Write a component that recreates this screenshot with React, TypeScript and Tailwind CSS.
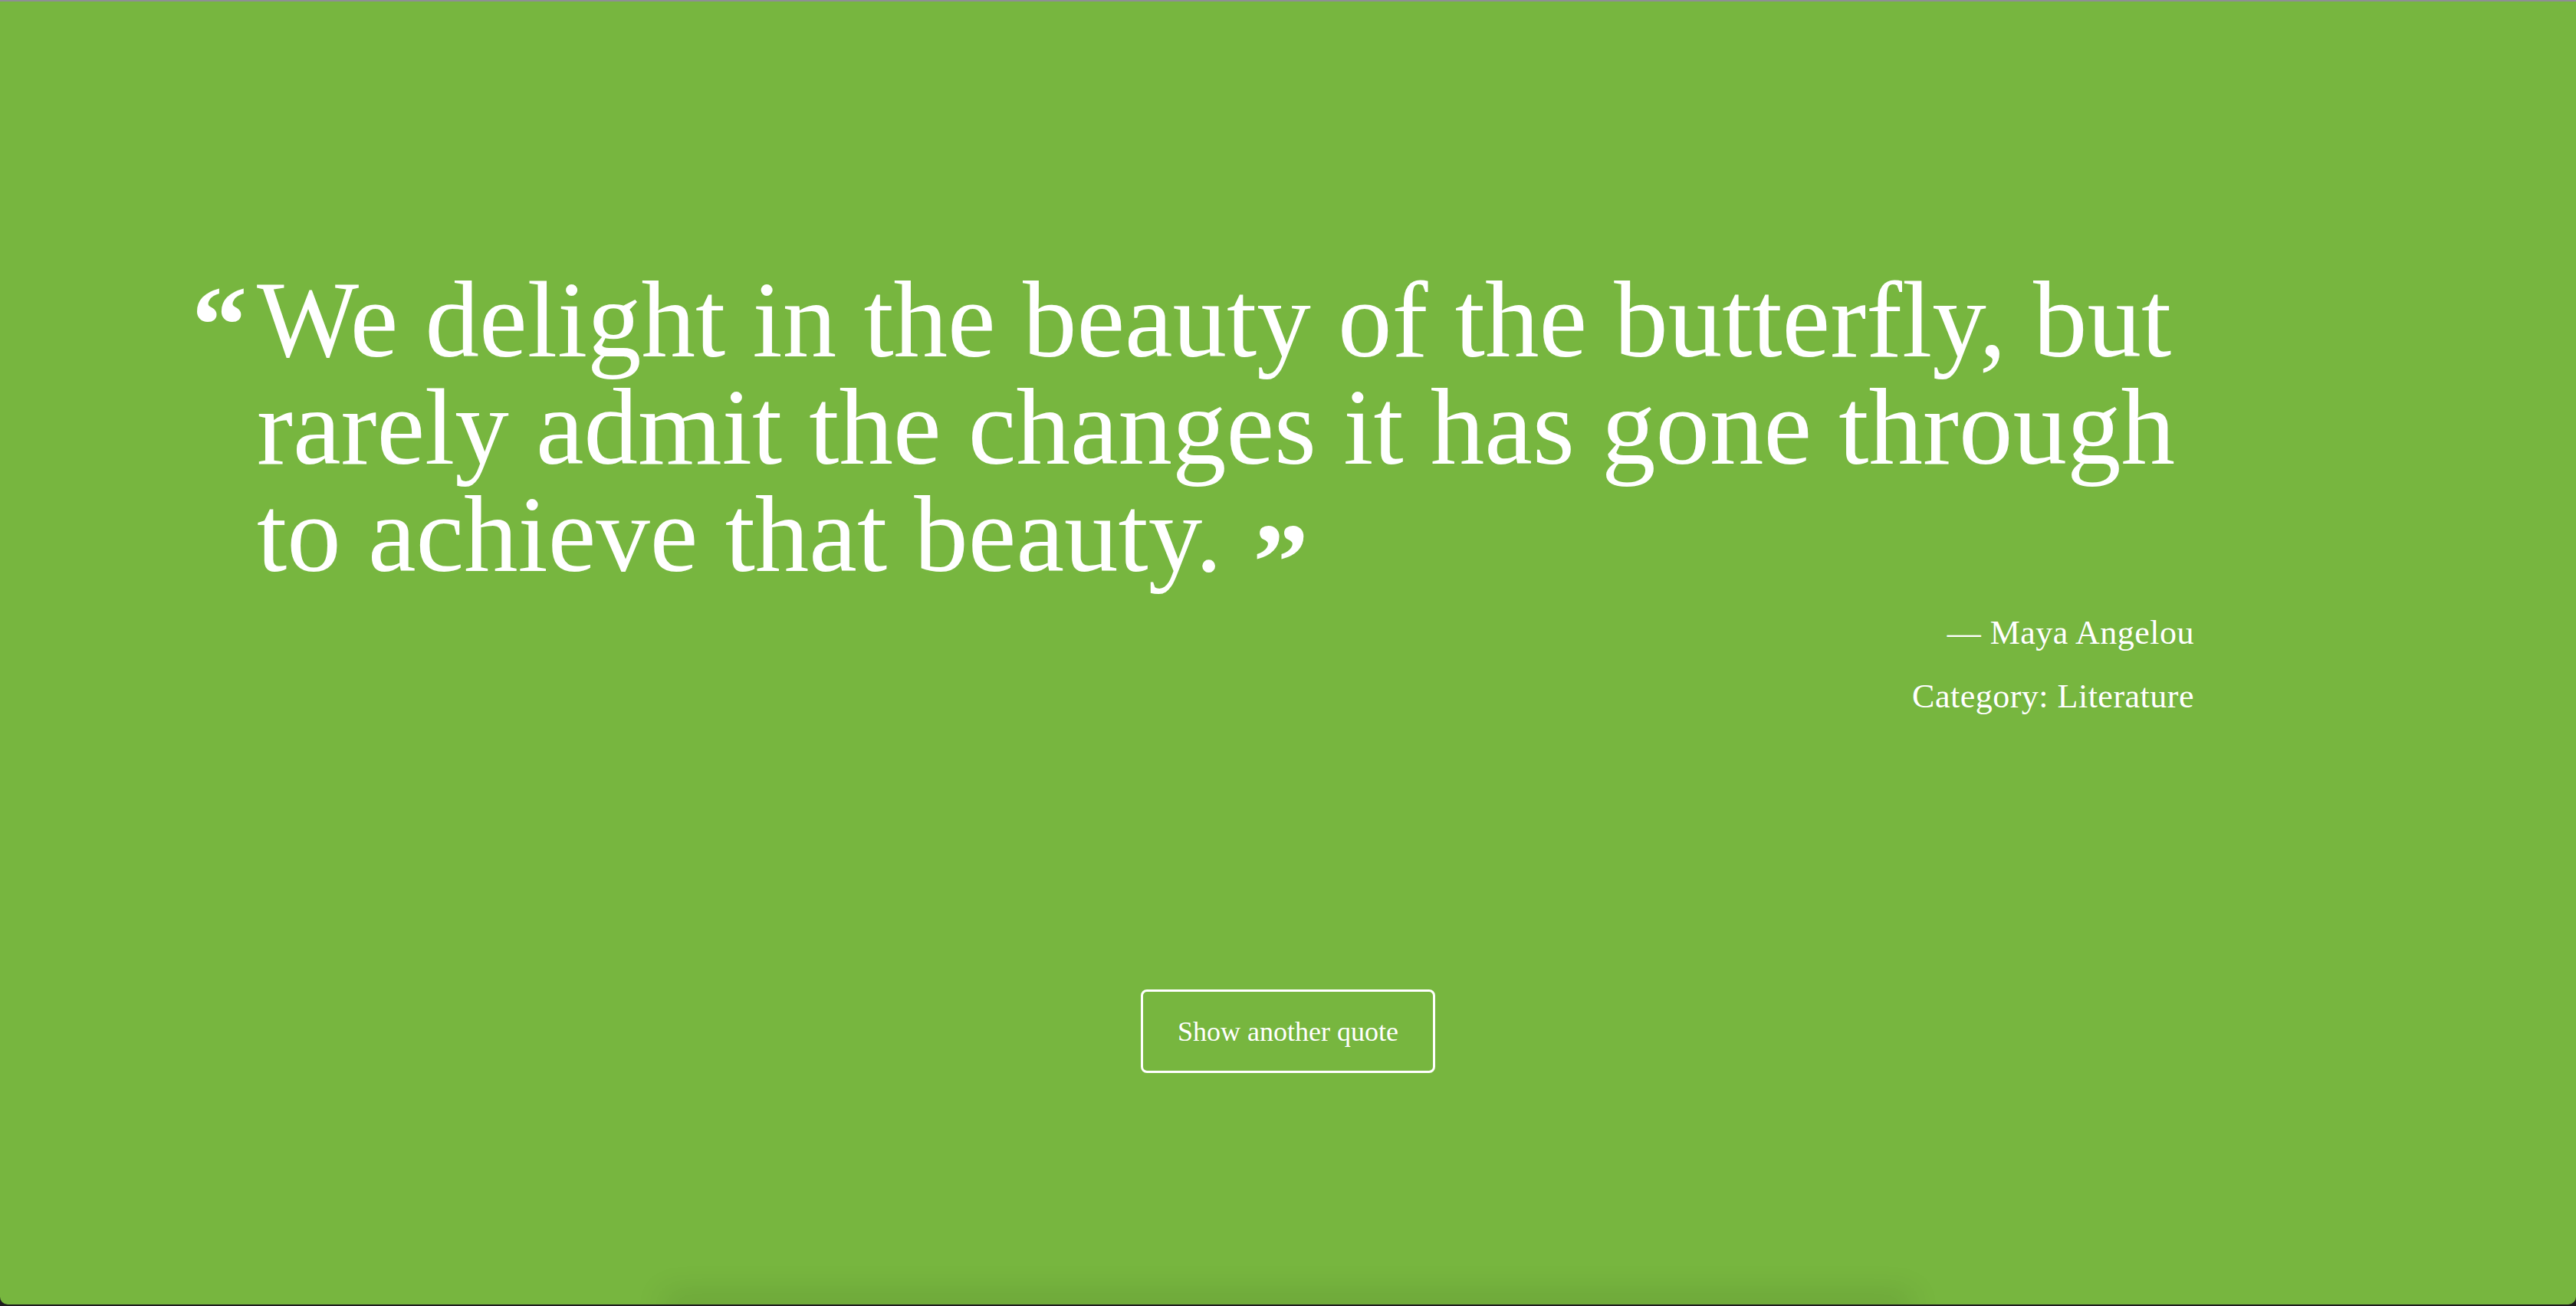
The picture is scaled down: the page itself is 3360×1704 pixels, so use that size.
import React from 'react';

const quote = {
    text: 'We delight in the beauty of the butterfly, but rarely admit the changes it has gone through to achieve that beauty.',
    author: 'Maya Angelou',
    category: 'Literature',
};

const serif = { fontFamily: '"Liberation Serif", "Times New Roman", serif' };

const App: React.FC = () => {
    return (
        <div className="h-[1704px] w-full bg-[#1e1e1e] overflow-hidden" style={serif}>
            <div className="h-[1702px] w-full bg-[#77b63f] border-t-2 border-[#8e8e93] rounded-b-[10px] overflow-hidden flex flex-col text-white">
                <main className="flex-1 pt-[345px] pl-[250px]">
                    <div className="w-[2612px]">
                        <blockquote className="flex items-start">
                            <span className="w-[85px] shrink-0 mt-[4px] text-[145px] leading-none font-bold">“</span>
                            <p className="w-[2600px] shrink-0 text-[141px] leading-[140px]">
                                {quote.text}
                                <span className="ml-[40px] text-[145px] leading-[0] font-bold align-[-37px]">”</span>
                            </p>
                        </blockquote>

                        <div className="mt-[17px] text-right text-[44px] leading-[83px] tracking-[0.5px]">
                            <p>— {quote.author}</p>
                            <p>Category: {quote.category}</p>
                        </div>
                    </div>

                    <div className="flex justify-center mt-[341px] pr-[250px]">
                        <button className="w-[384px] h-[109px] border-[3px] border-white rounded-[8px] text-[36px] text-white flex items-center justify-center">
                            Show another quote
                        </button>
                    </div>
                </main>
                <div className="mx-auto w-[1600px] h-0 shadow-[0_0_40px_14px_rgba(0,0,0,0.12)]" />
            </div>
        </div>
    );
};

export default App;
